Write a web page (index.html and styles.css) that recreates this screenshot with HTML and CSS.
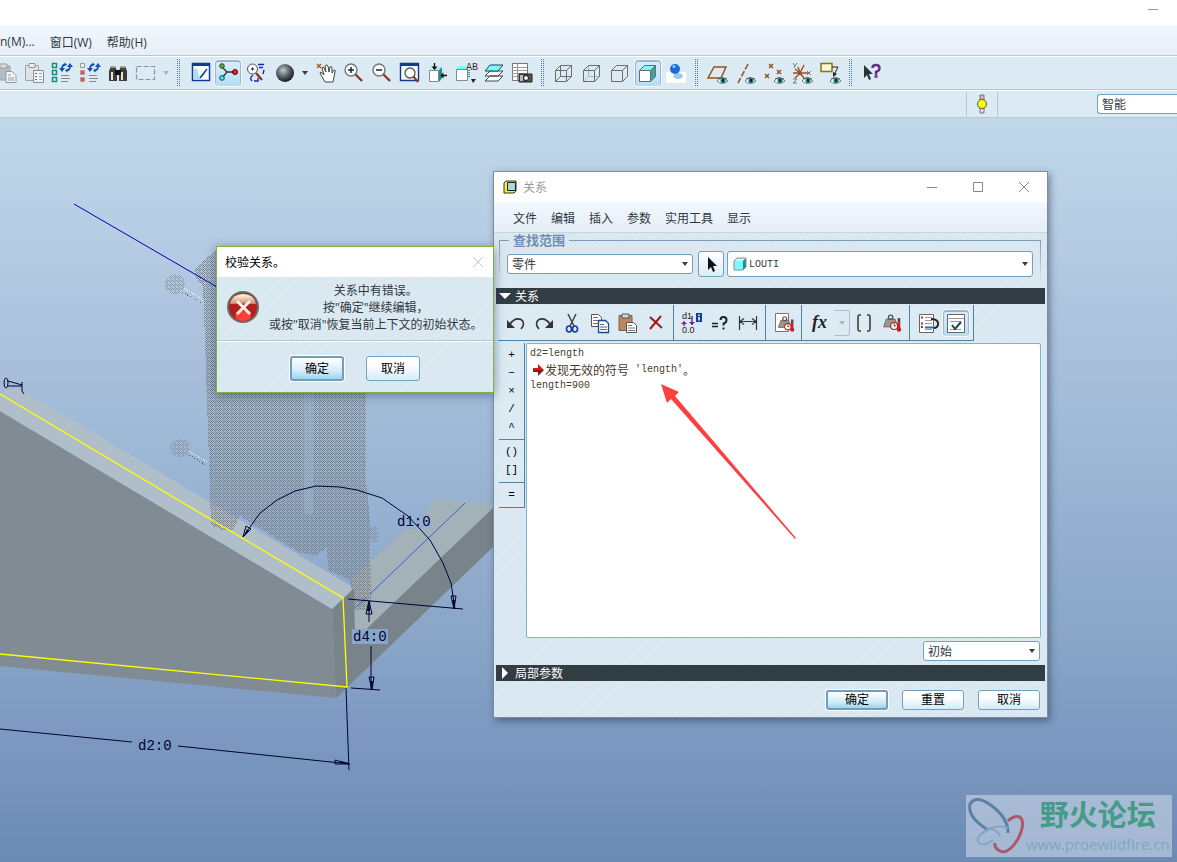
FILE: index.html
```
<!DOCTYPE html>
<html lang="zh-CN">

<head>
    <meta charset="utf-8">
    <title>关系</title>
    <meta name="viewport" content="width=device-width, initial-scale=1">
    <link rel="stylesheet" href="styles.css">
</head>

<body>
    <!-- shared icon parts -->
    <svg class="defs" width="0" height="0" aria-hidden="true">
        <symbol id="eye" viewBox="0 0 11 7">
            <path d="M0 4Q5-2 11 4Q5 9 0 4Z" fill="#fff" stroke="#777" stroke-width="1"/>
            <path d="M1 2Q5-1 10 2" fill="none" stroke="#555"/>
            <circle cx="6" cy="3.5" r="2.6" fill="#108888"/><rect x="5" y="2" width="2" height="3" fill="#123"/>
        </symbol>
        <symbol id="lens" viewBox="0 0 24 24">
            <path d="M13 13L20 20" stroke="#8b3a20" stroke-width="2.4"/>
            <circle cx="9" cy="9" r="6" fill="#f6fbff" stroke="#777" stroke-width="1.4"/>
        </symbol>
        <symbol id="cube" viewBox="0 0 24 24">
            <path d="M3.500 9.500h11v11h-11ZM3.500 9.500L8.500 4.500h11L14.500 9.500M19.500 4.500v11l-5 5" fill="none" stroke="#6b6b6b"/>
        </symbol>
        <symbol id="swap" viewBox="0 0 24 24">
            <path d="M12 8Q12 4 15 3.500M20 5Q20 9 17 9.500" fill="none" stroke="#1450b8" stroke-width="1.800"/>
            <path d="M9 7h6l-3 4ZM17 6h6l-3-4ZM14.500 1.500v4l2.500-2ZM17.500 7.500v4l-2.500-2Z" fill="#1450b8"/>
            <path d="M11 14.500h8M11 17.500h9M11 20.500h7" stroke="#888"/>
        </symbol>
        <symbol id="weight" viewBox="0 0 24 24">
            <path d="M3 17L6 8h10l3 9Z" fill="#999790" stroke="#666"/><circle cx="11" cy="6" r="2.500" fill="none" stroke="#555" stroke-width="1.500"/>
            <circle cx="15" cy="16" r="4" fill="#fff" stroke="#a22" stroke-width="1.300"/><path d="M15 13v3h2" fill="none" stroke="#222"/>
            <path d="M20.500 7v12" stroke="#444" stroke-width="3"/><path d="M20.500 10v10" stroke="#e02020" stroke-width="2"/><circle cx="20.500" cy="20" r="2.500" fill="#d01818"/>
        </symbol>
    </svg>

    <header class="titlebar"><button class="min" aria-label="最小化"></button></header>

    <nav class="menubar">
        <a href="#app">n(M)...</a>
        <a href="#window">窗口(W)</a>
        <a href="#help">帮助(H)</a>
    </nav>

    <div class="toolbar">
        <button class="tool" aria-label="粘贴"><svg viewBox="0 0 24 24"><path d="M3 5h13v14H3Z" fill="#b5bcc1" stroke="#969da2"/><path d="M6 3h7v4H6Z" fill="#ddd" stroke="#999"/><path d="M12 10.500h6l4 4v7H12Z" fill="#f1f4f6" stroke="#999"/><path d="M14 14h3M14 17h6M14 19h6" stroke="#999"/></svg></button>
        <button class="tool" aria-label="选择性粘贴"><svg viewBox="0 0 24 24"><path d="M3.500 4.500h13v15h-13Z" fill="#dde2e6" stroke="#a0a5a8"/><path d="M7 2.500h6v4H7Z" fill="#eee" stroke="#999"/><path d="M11.500 9.500h10v12h-10Z" fill="#f1f4f6" stroke="#8a9096"/><path d="M13 12.500h2M13 15.500h2M13 18.500h2" stroke="#667"/><path d="M17 12.500h3M17 15.500h3M17 18.500h3" stroke="#9ab"/></svg></button>
        <button class="tool" aria-label="再生"><svg viewBox="0 0 24 24"><path d="M2.500 2.500h4v4h-4ZM2.500 9.500h4v4h-4ZM2.500 16.500h4v4h-4Z" fill="#d8f4f0" stroke="#178c80" stroke-width="1.500"/><use href="#swap"/></svg></button>
        <button class="tool" aria-label="再生管理器"><svg viewBox="0 0 24 24"><path d="M2.500 2.500h4v4h-4Z" fill="#eee" stroke="#999"/><path d="M2.500 9.500h4v4h-4ZM2.500 16.500h4v4h-4Z" fill="#e85040" stroke="#b99" stroke-width="1"/><use href="#swap"/></svg></button>
        <button class="tool" aria-label="查找"><svg viewBox="0 0 24 24"><path d="M3 20V10l2-5h4l2 5v10ZM13 20V10l2-5h4l2 5v10Z" fill="#3c3c38"/><path d="M6 11v8M16 11v8" stroke="#e8e4d0" stroke-width="2"/><path d="M9 9h6v5H9Z" fill="#111"/><path d="M5 6h4M15 6h4" stroke="#999" stroke-width="2"/></svg></button>
        <button class="tool" aria-label="选择框"><svg viewBox="0 0 24 24"><path d="M2.500 5.500h18v13h-18Z" fill="none" stroke="#8c959b" stroke-width="1.200" stroke-dasharray="5 2"/></svg></button>
        <button class="drop faded" aria-label="选择选项"></button>
        <span class="grip"></span>
        <button class="tool" aria-label="重画"><svg viewBox="0 0 24 24"><path d="M4.500 2.500h17v17h-17Z" fill="#fff" stroke="#103a94" stroke-width="1.500"/><path d="M4 2h18v3H4Z" fill="#103a94"/><path d="M6 7l12 5-7 7H6Z" fill="#a8dff4"/><path d="M9 7l9 4-7 5" fill="#e8f8ff"/><path d="M19 8l-7 9" stroke="#204080" stroke-width="1.500"/></svg></button>
        <button class="tool active" aria-label="旋转中心"><svg viewBox="0 0 24 24"><path d="M6 6l5 5h8M11 11l-5 6" fill="none" stroke="#333" stroke-width="1.300"/><circle cx="6" cy="5" r="2.300" fill="#6a3" stroke="#243"/><circle cx="6" cy="17" r="2.300" fill="#4ee" stroke="#144"/><circle cx="19" cy="11" r="2.500" fill="#e22" stroke="#500"/></svg></button>
        <button class="tool" aria-label="定向模式"><svg viewBox="0 0 24 24"><path d="M12 12l6 7" stroke="#8b3a20" stroke-width="2.500"/><circle cx="8.500" cy="8" r="5" fill="#f4faff" stroke="#555"/><path d="M7 8h3M8.500 6.500v3" stroke="#222"/><path d="M14 3.500h6M15 6.500h4M20 9l-1 4M9 14q-4 3-1 6M10 20h4v-3" fill="none" stroke="#1828a0" stroke-width="1.400"/></svg></button>
        <button class="tool" aria-label="外观库"><svg viewBox="0 0 24 24"><defs><radialGradient id="ball" cx=".4" cy=".35" r=".65"><stop offset="0" stop-color="#c4cdd2"/><stop offset=".45" stop-color="#69737a"/><stop offset="1" stop-color="#171c20"/></radialGradient></defs><circle cx="13" cy="12" r="9" fill="url(#ball)"/></svg></button>
        <button class="drop wide" aria-label="外观选项"></button>
        <button class="tool" aria-label="平移"><svg viewBox="0 0 24 24"><path d="M3 3l4 4M7 3L3 7" stroke="#b05a20" stroke-width="1.400"/><path d="M11 21l-4-7q-2-3 0-3l3 3-2-7q1-2 2 0l2 4-1-6q2-2 3 0l1 6 1-5q2-1 2 1v5l2-3q2 0 1 2l-2 10Z" fill="#fff" stroke="#444"/></svg></button>
        <button class="tool" aria-label="放大"><svg viewBox="0 0 24 24"><use href="#lens"/><path d="M6 9h6M9 6v6" stroke="#222" stroke-width="1.500"/></svg></button>
        <button class="tool" aria-label="缩小"><svg viewBox="0 0 24 24"><use href="#lens"/><path d="M6 9h6" stroke="#222" stroke-width="1.500"/></svg></button>
        <button class="tool" aria-label="重新调整"><svg viewBox="0 0 24 24"><path d="M2.500 2.500h18v17h-18Z" fill="#f4f9fc" stroke="#103a94" stroke-width="1.400"/><path d="M2 2h19v3H2Z" fill="#103a94"/><path d="M15 15l5 6" stroke="#8b3a20" stroke-width="2"/><circle cx="12" cy="12" r="5" fill="#fff" stroke="#555" stroke-width="1.300"/></svg></button>
        <button class="tool" aria-label="重定向"><svg viewBox="0 0 24 24"><path d="M3.500 9.500h9v11h-9Z" fill="#fff" stroke="#888"/><path d="M3 9l3-3h10l-3 3Z" fill="#8ff"/><path d="M13 9l3-3v11l-3 4Z" fill="#189090"/><path d="M8.500 2v6M21 14.500h-6" stroke="#111" stroke-width="1.400"/><path d="M5.500 5.500h6l-3 3.500ZM17.500 11.500v6l-3-3Z" fill="#111"/></svg></button>
        <button class="tool" aria-label="已保存视图"><svg viewBox="0 0 24 24"><path d="M2.500 8.500h11v11h-11Z" fill="#fff" stroke="#888"/><path d="M2 8l3-3h7v3Z" fill="#7ff"/><path d="M15 9v8" stroke="#289090" stroke-width="2" stroke-dasharray="1 1"/><path d="M17 18h5l-3 4Z" fill="#222"/><text x="12" y="9" class="ab">AB</text></svg></button>
        <button class="tool" aria-label="层"><svg viewBox="0 0 24 24"><path d="M3 20l5-5h13l-5 5ZM3 15l5-5h13l-5 5Z" fill="#fff" stroke="#444"/><path d="M3 10l5-6h13l-5 6Z" fill="#7ff" stroke="#245"/></svg></button>
        <button class="tool" aria-label="视图管理器"><svg viewBox="0 0 24 24"><path d="M2.500 2.500h15v17h-15Z" fill="#fff" stroke="#777"/><path d="M2 6.500h15M2 9.500h15M2 12.500h15M2 15.500h15M7.500 3v16" stroke="#999"/><path d="M9 13h13v8H9Z" fill="#55534c" stroke="#222"/><path d="M10 14h3v6h-3Z" fill="#bbb"/><circle cx="16" cy="17" r="2.500" fill="#dff" stroke="#111"/></svg></button>
        <span class="grip"></span>
        <button class="tool" aria-label="线框"><svg viewBox="0 0 24 24"><use href="#cube"/><path d="M8.500 4.500v11h11M8.500 15.500l-5 5" fill="none" stroke="#6b6b6b"/></svg></button>
        <button class="tool" aria-label="隐藏线"><svg viewBox="0 0 24 24"><path d="M8.500 4.500v11h11M8.500 15.500l-5 5" fill="none" stroke="#b5b5b0"/><use href="#cube"/></svg></button>
        <button class="tool" aria-label="消隐"><svg viewBox="0 0 24 24"><use href="#cube"/></svg></button>
        <button class="tool active" aria-label="着色"><svg viewBox="0 0 24 24"><path d="M4 9h11v11H4Z" fill="#fff"/><path d="M4 9l5-5h11l-5 5Z" fill="#7ff"/><path d="M15 9l5-5v11l-5 5Z" fill="#3aa3a3"/><use href="#cube"/></svg></button>
        <button class="tool" aria-label="增强的真实感"><svg viewBox="0 0 24 24"><path d="M2 11h20v11H2Z" fill="#fff"/><ellipse cx="14" cy="15" rx="5" ry="3" fill="#9fc8ef"/><circle cx="11" cy="8" r="5" fill="#1d6be0"/><circle cx="10" cy="5.500" r="1.500" fill="#9cf"/></svg></button>
        <span class="grip"></span>
        <button class="tool" aria-label="平面显示"><svg viewBox="0 0 24 24"><path d="M2 17l6-11h12l-5 11Z" fill="none" stroke="#97511f" stroke-width="1.500"/><use href="#eye" x="11" y="16" width="11" height="7"/></svg></button>
        <button class="tool" aria-label="轴显示"><svg viewBox="0 0 24 24"><path d="M14 3L4 22" stroke="#97511f" stroke-width="1.600" stroke-dasharray="6 2"/><use href="#eye" x="11" y="16" width="11" height="7"/></svg></button>
        <button class="tool" aria-label="点显示"><svg viewBox="0 0 24 24"><path d="M7 3l4 4M11 3l-4 4M3 13l4 4M7 13l-4 4M15 9l4 4M19 9l-4 4" stroke="#97511f" stroke-width="1.500"/><use href="#eye" x="12" y="16" width="11" height="7"/></svg></button>
        <button class="tool" aria-label="坐标系显示"><svg viewBox="0 0 24 24"><path d="M10 12h9M10 12l4-8M5 8l5 4-5 5M3 12h7l4 5M10 12l-2-6" fill="none" stroke="#97511f" stroke-width="1.400"/><path d="M3 2l2 3 2-3M5 5l-1 2M3 18h4l-4 4h4M17 10l4 4M21 10l-4 4" fill="none" stroke="#777"/><use href="#eye" x="12" y="16" width="11" height="7"/></svg></button>
        <button class="tool" aria-label="注释显示"><svg viewBox="0 0 24 24"><path d="M3 2.500h11v8H3Z" fill="#fbf5d8" stroke="#837800" stroke-width="1.500"/><path d="M14 6h6l-4 8" fill="none" stroke="#222"/><path d="M15 16v-5l4 2Z" fill="#222"/><use href="#eye" x="12" y="16" width="11" height="7"/></svg></button>
        <span class="grip"></span>
        <button class="tool" aria-label="上下文帮助"><svg viewBox="0 0 24 24"><path d="M4 4v13l3-3 2 5 2-1-2-5h4Z" fill="#27343c"/><path d="M12.500 7q0-3 3.500-3t3.500 3-3.500 4v3M14.500 15.500h3" fill="none" stroke="#6c2d86" stroke-width="2.400"/></svg></button>
    </div>

    <div class="statusbar">
        <div class="light"><svg viewBox="0 0 12 20"><path d="M4 1h4v5H4Z" fill="#e3b3a0" stroke="#777"/><path d="M4 14h4v5H4Z" fill="#dde4c8" stroke="#777"/><circle cx="6" cy="10" r="4.500" fill="#ff0" stroke="#554"/></svg></div>
        <select class="filter" aria-label="选择过滤器"><option>智能</option></select>
    </div>

    <main class="viewport">
        <svg class="model" viewBox="0 118 1177 744" preserveAspectRatio="xMinYMin slice">
            <defs>
                <pattern id="dither" width="4" height="4" patternUnits="userSpaceOnUse">
                    <path d="M0 0h1v1h-1ZM2 0h1v1h-1ZM1 1h1v1h-1ZM3 1h1v1h-1ZM0 2h1v1h-1ZM2 2h1v1h-1ZM3 3h1v1h-1Z" fill="#74797c" fill-opacity=".85"/>
                </pattern>
                <pattern id="dots" width="4" height="4" patternUnits="userSpaceOnUse">
                    <path d="M0 0h1v1h-1ZM2 0h1v1h-1ZM1 1h1v1h-1ZM3 1h1v1h-1ZM2 2h1v1h-1ZM3 3h1v1h-1Z" fill="#808588" fill-opacity=".7"/>
                </pattern>
            </defs>
            <polygon points="351,580 438,499 493,504 493,508 367,629 355,640 354,588" fill="#a3b1b9"/>
            <polygon points="493,508 493,547 336,698 332,609 354,588 355,640" fill="#78838a"/>
            <polygon points="0,411 332,609 336,698 0,666" fill="#808b93"/>
            <polygon points="0,393 12,389 22,390 354,588 332,609 0,411" fill="#b0bec9"/>
            <g shape-rendering="crispEdges">
                <path d="M195 268L216 250L366 260L366 480L370 520L371 610L355 610L350 580L328 570L327 548L316 555L300 553L240 516L233 530H222L211 525L207 400L203 285L196 280Z" fill="url(#dither)"/>
                <path d="M304 394h9v120h-9Z" fill="#9fb8d5" fill-opacity=".4"/>
                <ellipse cx="175" cy="284" rx="10" ry="10" fill="url(#dots)"/>
                <ellipse cx="180" cy="448" rx="10" ry="9" fill="url(#dots)"/>
                <ellipse cx="374" cy="534" rx="5" ry="8" fill="url(#dots)"/>
                <path d="M184 288l18 11M189 451l19 11" stroke="#e8f0f8" stroke-dasharray="1 1"/>
                <path d="M182 292l20 11M189 455l17 10" stroke="#546678" stroke-dasharray="1 2"/>
            </g>
            <path d="M74 204L217 287" stroke="#0000b8"/>
            <path d="M355 608L366 598M370 594L465 503" stroke="#2a68cc"/>
            <path d="M0 394L343 598L347 687L0 654" fill="none" stroke="#ff0" stroke-width="1.300"/>
            <rect x="352" y="629" width="36" height="15" fill="#89a5c8"/>
            <path d="M397 513h28l6 8v8h-34Z" fill="#95afd0"/>
            <g fill="none" stroke="#000038">
                <path d="M243 537L260 513L277 500L295 491L316 486L340 487L357 490L382 498L408 516L430 540L443 563L451 583L455 609"/>
                <path d="M243 537l3-11 5 3ZM454 609l-3-13h5ZM369 601l-3 13h6ZM372 690l-3-13h5ZM349 764l-14-4v4Z"/>
                <path d="M348 599L463 609M369 602v20M371 646v44M351 688L380 690M0 729L132 742M178 746L350 764M346 688L349 770M8 381l14 4M8 386h14M22 382v9l2 3"/>
                <ellipse cx="6" cy="383" rx="2" ry="5"/>
            </g>
            <path d="M244 536l3-7 2 2ZM454 608l-2-8h3ZM369 603l-2 8h3ZM372 689l-2-8h3ZM349 763l-9-2v2Z" fill="#000038"/>
            <g class="dims">
                <text x="397" y="526">d1:0</text>
                <text x="353" y="641">d4:0</text>
                <text x="138" y="750">d2:0</text>
            </g>
        </svg>

        <section class="window relations">
            <header class="win-title">
                <svg class="app-icon" viewBox="0 0 14 14"><path d="M1 3l2-2h10v10l-2 2H1Z" fill="#f7ef35" stroke="#333"/><path d="M4.500 2.500h8v8h-8Z" fill="#a0dce8" stroke="#222"/></svg>
                <span>关系</span>
                <div class="win-buttons">
                    <button aria-label="最小化"><svg viewBox="0 0 12 12"><path d="M1 6.500h10"/></svg></button>
                    <button aria-label="最大化"><svg viewBox="0 0 12 12"><path d="M1.500 1.500h9v9h-9Z"/></svg></button>
                    <button aria-label="关闭"><svg viewBox="0 0 12 12"><path d="M1 1l10 10M11 1L1 11"/></svg></button>
                </div>
            </header>
            <nav class="win-menu">
                <a href="#file">文件</a>
                <a href="#edit">编辑</a>
                <a href="#insert">插入</a>
                <a href="#params">参数</a>
                <a href="#tools">实用工具</a>
                <a href="#show">显示</a>
            </nav>

            <fieldset class="scope">
                <legend>查找范围</legend>
                <div class="scope-row">
                    <div class="combo type"><select aria-label="对象类型"><option>零件</option></select></div>
                    <button class="pick" aria-label="选择"><svg viewBox="0 0 24 24"><path d="M9 5v13l3-3 2 5 2-1-2-5h4Z" fill="#111"/></svg></button>
                    <div class="combo object">
                        <svg class="part" viewBox="0 0 14 14"><path d="M1 4h9v9H1Z" fill="#7ff"/><path d="M1 4l3-3h9l-3 3Z" fill="#bff"/><path d="M10 4l3-3v9l-3 3Z" fill="#189090"/><path d="M1 13V4l3-3h9v9l-3 3Z" fill="none" stroke="#889"/></svg>
                        <select aria-label="对象"><option>LOUTI</option></select>
                    </div>
                </div>
            </fieldset>

            <button class="section-bar"><span class="tri open"></span>关系</button>
            <div class="edit-tools">
                <div class="group">
                    <button class="tool" aria-label="撤消"><svg viewBox="0 0 24 24"><path d="M6 13Q11 6 17 8.500Q22 12 17 18" fill="none" stroke="#333" stroke-width="1.600"/><path d="M3 9v8h8Z" fill="#333"/></svg></button>
                    <button class="tool" aria-label="重做"><svg viewBox="0 0 24 24"><path d="M18 13Q13 6 7 8.500Q2 12 7 18" fill="none" stroke="#333" stroke-width="1.600"/><path d="M21 9v8h-8Z" fill="#333"/></svg></button>
                    <button class="tool" aria-label="剪切"><svg viewBox="0 0 24 24"><path d="M8 3l6 12M16 3l-6 12" stroke="#444" stroke-width="1.500"/><ellipse cx="9" cy="18" rx="2.500" ry="3" fill="none" stroke="#1038a0" stroke-width="1.600"/><ellipse cx="15" cy="18" rx="2.500" ry="3" fill="none" stroke="#1038a0" stroke-width="1.600"/></svg></button>
                    <button class="tool" aria-label="复制"><svg viewBox="0 0 24 24"><path d="M3.500 3.500h7l3 3v9h-10Z" fill="#fff" stroke="#555"/><path d="M5 6.500h5M5 9.500h6M5 12.500h5" stroke="#777"/><path d="M10.500 9.500h7l3 3v9h-10Z" fill="#fff" stroke="#204890" stroke-width="1.300"/><path d="M12 13.500h4M12 16h7M12 18.500h7" stroke="#567"/></svg></button>
                    <button class="tool" aria-label="粘贴"><svg viewBox="0 0 24 24"><path d="M3 4.500h13v15H3Z" fill="#bd875c" stroke="#765"/><path d="M6 3h7v4H6Z" fill="#cdd" stroke="#555"/><path d="M10.500 11.500h7l3 3v7h-10Z" fill="#fff" stroke="#555"/><path d="M12 14.500h4M12 17h7M12 19.500h7" stroke="#777"/></svg></button>
                    <button class="tool" aria-label="删除"><svg viewBox="0 0 24 24"><path d="M6 6l12 11M17 5L6 18" stroke="#a01818" stroke-width="2"/></svg></button>
                </div>
                <div class="group">
                    <button class="tool" aria-label="切换尺寸"><svg viewBox="0 0 24 24"><text x="2" y="8" class="tiny">d1</text><text x="2" y="22" class="tiny">0.0</text><path d="M4 15v-4M12 5v9" stroke="#7a2090" stroke-width="1.400"/><path d="M1 13l3-3 3 3ZM9 11h6l-3 3Z" fill="#7a2090"/><path d="M16 2h6v9h-6Z" fill="#10409c"/><path d="M19 3.500v1.500M19 6v3.500" stroke="#fff" stroke-width="1.500"/></svg></button>
                    <button class="tool" aria-label="求值"><svg viewBox="0 0 24 24"><path d="M4 12.500h6M4 15.500h6" stroke="#222" stroke-width="1.500"/><path d="M12.500 9q0-3 3-3t3 3-3 3.500v2M14.500 17.500h2" fill="none" stroke="#222" stroke-width="2"/></svg></button>
                    <button class="tool" aria-label="显示尺寸"><svg viewBox="0 0 24 24"><path d="M3.500 5v14M20.500 5v14M4 10.500h16M8 7.500l-4 3 4 3M16 7.500l4 3-4 3" fill="none" stroke="#333" stroke-width="1.200"/></svg></button>
                </div>
                <div class="group">
                    <button class="tool" aria-label="设置单位"><svg viewBox="0 0 24 24"><path d="M3.500 2.500h13v18h-13Z" fill="#fff" stroke="#777"/><use href="#weight" x="4" y="3" width="19" height="19"/></svg></button>
                </div>
                <div class="group">
                    <button class="tool" aria-label="函数"><svg viewBox="0 0 24 24"><text x="4" y="17" class="fx">fx</text></svg></button>
                    <button class="drop boxed" aria-label="函数列表"></button>
                    <button class="tool" aria-label="括号"><svg viewBox="0 0 24 24"><path d="M9 4H7Q6 4 6 6v12q0 2 1 2h2M15 4h2q1 0 1 2v12q0 2-1 2h-2" fill="none" stroke="#443c30" stroke-width="1.600"/></svg></button>
                    <button class="tool" aria-label="质量属性"><svg viewBox="0 0 24 24"><use href="#weight" x="1" y="1" width="21" height="21"/></svg></button>
                </div>
                <div class="group">
                    <button class="tool" aria-label="排序"><svg viewBox="0 0 24 24"><path d="M3.500 3.500h14v18h-14Z" fill="#fff" stroke="#666"/><path d="M5 6.500h2M5 12.500h2M5 16h2" stroke="#c22" stroke-width="2"/><path d="M9 6.500h7M9 9.500h7M9 12.500h7M9 18.500h7" stroke="#999"/><path d="M9 16.500h8" stroke="#2070d0" stroke-width="2"/><path d="M15 8q8 0 7 6-1 3-4 3" fill="none" stroke="#222" stroke-width="2"/></svg></button>
                    <button class="tool active" aria-label="校验"><svg viewBox="0 0 24 24"><path d="M3.500 3.500h17v18h-17Z" fill="#fbfcfc" stroke="#666"/><path d="M3 7.500h17M6 10.500h11M6 18.500h11" stroke="#999"/><path d="M8 14l3 4 6-7" fill="none" stroke="#164b4b" stroke-width="2"/></svg></button>
                </div>
            </div>

            <div class="editor-row">
                <div class="operators">
                    <div class="ops">
                        <button>+</button>
                        <button>−</button>
                        <button>×</button>
                        <button>/</button>
                        <button>^</button>
                    </div>
                    <div class="ops">
                        <button>()</button>
                        <button>[]</button>
                    </div>
                    <div class="ops"><button>=</button></div>
                </div>
                <div class="editor" role="textbox" aria-multiline="true" aria-label="关系" contenteditable="true" spellcheck="false">
                    <div>d2=length</div>
                    <div class="error-line"><svg viewBox="0 0 12 12"><path d="M0 4h5V0l6 6H0Z" fill="#f01010"/><path d="M0 6h11l-6 6V8H0Z" fill="#702020"/></svg><span class="cn">发现无效的符号</span> 'length'<span class="cn">。</span></div>
                    <div>length=900</div>
                </div>
            </div>
            <div class="initial-row">
                <div class="combo initial"><select aria-label="初始"><option>初始</option></select></div>
            </div>

            <button class="section-bar"><span class="tri"></span>局部参数</button>
            <footer class="actions">
                <button class="btn primary">确定</button>
                <button class="btn">重置</button>
                <button class="btn">取消</button>
            </footer>
            <svg class="pointer" viewBox="0 0 136 156"><polygon points="0,0 18,8 14,12 135,154 134,155 10,15 6,19" fill="#fb4040"/></svg>
        </section>

        <section class="window alert">
            <header class="win-title">
                <span>校验关系。</span>
                <button class="close" aria-label="关闭"><svg viewBox="0 0 12 12"><path d="M1 1l10 10M11 1L1 11"/></svg></button>
            </header>
            <div class="message">
                <svg viewBox="0 0 32 32">
                    <defs><linearGradient id="gloss" x2="0" y2="1"><stop offset="0" stop-color="#fffdf0"/><stop offset="1" stop-color="#d08a6c"/></linearGradient></defs>
                    <circle cx="16" cy="16" r="15" fill="#b41f1c" stroke="#6b6b68" stroke-width="2"/>
                    <path d="M3 13Q5 3 16 3T29 13Q16 12 3 13Z" fill="url(#gloss)"/>
                    <ellipse cx="16" cy="25" rx="8" ry="5" fill="#ff4038"/>
                    <path d="M10 10l13 13M23 10L10 23" stroke="#f4f0ec" stroke-width="3"/>
                </svg>
                <p>关系中有错误。<br>按"确定"继续编辑，<br>或按"取消"恢复当前上下文的初始状态。</p>
            </div>
            <footer class="actions">
                <button class="btn primary">确定</button>
                <button class="btn">取消</button>
            </footer>
        </section>

        <aside class="watermark">
            <svg viewBox="0 0 60 60" fill="none">
                <path d="M22 35Q1 22 4 9Q10-1 26 11Q42 23 42 38" stroke="#5a80a4" stroke-width="3"/>
                <path d="M42 26Q48 20 54 22Q60 28 52 44Q42 60 34 56Q28 53 29 48" stroke="#a9596a" stroke-width="3"/>
                <path d="M42 33Q30 29 20 36Q8 42 13 48Q18 52 27 45M20 33Q30 33 34 41" stroke="#83a5c4" stroke-width="2"/>
            </svg>
            <div>
                <strong>野火论坛</strong>
                <a href="#forum">www.proewildfire.cn</a>
            </div>
        </aside>
    </main>
</body>

</html>
```
FILE: styles.css
```
* {
    box-sizing: border-box;
}

body {
    margin: 0;
    min-height: 100vh;
    display: flex;
    flex-direction: column;
    overflow: hidden;
    font-family: "Open Sans", "Noto Sans CJK SC", sans-serif;
    font-size: 12px;
    color: #30383f;
    background-color: #dceaf3;
}

button,
select {
    font: inherit;
    color: inherit;
    margin: 0;
    padding: 0;
    border: none;
    background: none;
}

a {
    color: inherit;
    text-decoration: none;
}

.defs {
    position: absolute;
}

/* main window */
.titlebar {
    height: 25px;
    background-color: #fff;
    display: flex;
    justify-content: flex-end;
    padding-right: 19px;
}

.min {
    width: 10px;
    height: 10px;
    border-bottom: 1px solid #999;
}

.menubar {
    height: 31px;
    display: flex;
    align-items: center;
    gap: 15px;
    padding: 3px 0 0;
    background: linear-gradient(#f1f8ff, #e6eef6);
    border-bottom: 1px solid #b6c8d6;
}

.toolbar {
    height: 34px;
    display: flex;
    align-items: center;
    margin-left: -8px;
    border-top: 1px solid #fff;
    border-bottom: 1px solid #b6c8d6;
}

.tool {
    width: 28px;
    height: 28px;
    flex: none;
    display: flex;
    align-items: center;
    justify-content: center;
    border-radius: 4px;
}

.tool svg {
    width: 24px;
    height: 24px;
    flex: none;
}

.tool.active {
    background: linear-gradient(#dceefa, #b5dcf5);
    border: 1px solid #f3f9fd;
    box-shadow: inset 0 1px 0 1px #9fb4c6;
}

.drop {
    width: 12px;
    height: 26px;
    flex: none;
    display: flex;
    align-items: center;
    justify-content: center;
}

.drop::before {
    content: "";
    border: 3px solid transparent;
    border-top: 4px solid #333d44;
    border-bottom: none;
}

.drop.wide {
    width: 14px;
}

.drop.faded::before,
.drop.boxed::before {
    border-top-color: #a9b4bb;
}

.drop.boxed {
    width: 16px;
    border: 1px solid #b3bdc5;
    border-left: none;
    border-radius: 0 3px 3px 0;
}

.grip {
    width: 14px;
    height: 28px;
    flex: none;
    background: linear-gradient(#4c7ca4 50%, transparent 50%) 5px 0 / 1px 2px repeat-y,
        linear-gradient(#4c7ca4 50%, transparent 50%) 7px 0 / 1px 2px repeat-y;
}

.ab {
    font: 10px "Liberation Mono", monospace;
    fill: #333;
}

.statusbar {
    height: 28px;
    display: flex;
    justify-content: flex-end;
    align-items: center;
    gap: 99px;
    border-top: 1px solid #fff;
    border-bottom: 1px solid #b6c8d6;
}

.light {
    width: 32px;
    height: 24px;
    display: flex;
    align-items: center;
    justify-content: center;
    border: solid #b6c6d2;
    border-width: 0 1px;
}

.light svg {
    width: 12px;
    height: 20px;
}

.filter {
    width: 80px;
    height: 20px;
    padding-left: 4px;
    appearance: none;
    background-color: #fff;
    border: 1px solid #73a2bd;
    border-right: none;
    border-radius: 3px 0 0 3px;
}

/* model view */
.viewport {
    flex: 1;
    position: relative;
    background: linear-gradient(#c0d7e9, #b5cbe3 18%, #a7bdd9 35%, #a2bdd9 38%, #97b1d2 52%, #8ba7c8 68%, #7f9bc2 80%, #6b8bb4);
}

.model {
    position: absolute;
    inset: 0;
    width: 100%;
    height: 100%;
}

.dims {
    font-family: "Liberation Mono", monospace;
    font-size: 14px;
    fill: #000038;
}

/* dialogs */
.window {
    position: absolute;
    background: repeating-linear-gradient(135deg, #d9e7f0 0 3px, #deebf3 3px 4px);
}

.win-title {
    height: 30px;
    display: flex;
    align-items: center;
    background-color: #fff;
}

.window .win-title svg {
    width: 12px;
    height: 12px;
    fill: none;
    stroke: #888;
}

.relations {
    left: 493px;
    top: 53px;
    width: 555px;
    border: 1px solid #7d8d9c;
    box-shadow: 2px 3px 7px rgba(30, 50, 80, 0.5);
}

.relations .win-title {
    padding-left: 9px;
    gap: 6px;
    color: #999;
}

.relations .win-title .app-icon {
    width: 14px;
    height: 14px;
    stroke: none;
}

.win-buttons {
    margin-left: auto;
    display: flex;
}

.win-buttons button {
    width: 46px;
    height: 28px;
}

.win-buttons svg {
    display: block;
    margin: 0 auto;
}

.win-menu {
    height: 31px;
    display: flex;
    align-items: center;
    gap: 14px;
    padding-left: 19px;
    padding-top: 2px;
    background: linear-gradient(#f1f8ff, #e6eef5);
    border-bottom: 1px solid #c6d5df;
}

.scope {
    min-width: 0;
    margin: 0 6px 5px 5px;
    padding: 4px 7px 5px;
    border: 1px solid #7f9abc;
    border-image: linear-gradient(#7f9abc, transparent) 1;
}

.scope legend {
    margin-left: 2px;
    padding: 0 4px;
    line-height: 14px;
    font-size: 13px;
    font-weight: bold;
    color: #6f8db0;
}

.scope-row {
    display: flex;
    align-items: center;
}

.combo {
    position: relative;
    height: 20px;
    display: flex;
    align-items: center;
    background-color: #fff;
    border: 1px solid #73a2bd;
    border-radius: 3px;
}

.combo::after {
    content: "";
    position: absolute;
    right: 4px;
    top: 50%;
    margin-top: -2px;
    border: 3px solid transparent;
    border-top: 4px solid #333d44;
    border-bottom: none;
    pointer-events: none;
}

.combo select {
    flex: 1;
    height: 100%;
    padding-left: 4px;
    appearance: none;
}

.type {
    width: 186px;
}

.pick {
    width: 26px;
    height: 26px;
    margin: 0 3px 0 5px;
    border: 1px solid #73a2bd;
    border-radius: 3px;
    background: linear-gradient(#fff, #dcedf8);
}

.pick svg {
    display: block;
    width: 24px;
    height: 24px;
}

.object {
    flex: 1;
    height: 26px;
    padding-left: 5px;
}

.object select {
    padding-left: 2px;
    font-family: "Liberation Mono", monospace;
    font-size: 10px;
}

.part {
    width: 14px;
    height: 14px;
}

.section-bar {
    width: calc(100% - 4px);
    height: 16px;
    margin: 0 2px;
    padding-left: 3px;
    display: flex;
    align-items: center;
    gap: 4px;
    color: #fff;
    background-color: #323c43;
}

.tri {
    width: 12px;
    height: 12px;
    background-color: #fff;
    clip-path: polygon(25% 0, 75% 50%, 25% 100%);
}

.tri.open {
    clip-path: polygon(0 25%, 100% 25%, 50% 75%);
}

.edit-tools {
    display: flex;
    margin: 1px 0 0 4px;
}

.group {
    display: flex;
    align-items: center;
    padding: 4px 3px 3px 4px;
    background-color: #dceaf3;
    border-right: 1px solid #5182a3;
    border-bottom: 1px solid #5182a3;
}

.fx {
    font: italic bold 18px "Liberation Serif", serif;
    fill: #222;
}

.tiny {
    font: 9px "Liberation Sans", sans-serif;
    fill: #222;
}

.editor-row {
    display: flex;
    gap: 1px;
    margin: 2px 6px 3px 5px;
}

.operators {
    width: 26px;
}

.ops {
    display: flex;
    flex-direction: column;
    background-color: #dceaf3;
    border-right: 1px solid #5182a3;
    border-bottom: 1px solid #5182a3;
    padding: 3px 0;
}

.ops button {
    height: 18px;
    line-height: 18px;
    font-family: "Liberation Mono", monospace;
    font-size: 11px;
    color: #000;
}

.editor {
    flex: 1;
    min-height: 295px;
    padding: 2px 3px;
    background-color: #fff;
    border: 1px solid #78b6d8;
    border-radius: 2px;
    font-family: "Liberation Mono", monospace;
    font-size: 10px;
    line-height: 16px;
    color: #4a3c28;
}

.editor > div {
    height: 16px;
}

.error-line {
    display: flex;
    align-items: center;
    white-space: pre;
    padding-left: 3px;
}

.error-line svg {
    width: 12px;
    height: 12px;
}

.cn {
    font-family: "Noto Sans CJK SC", sans-serif;
    font-size: 12px;
}

.initial-row {
    display: flex;
    justify-content: flex-end;
    margin: 0 7px 4px;
}

.initial {
    width: 117px;
}

.actions {
    display: flex;
}

.relations .actions {
    justify-content: flex-end;
    gap: 14px;
    padding: 9px 7px 7px;
}

.btn {
    width: 62px;
    height: 20px;
    line-height: 18px;
    color: #000;
    border: 1px solid #73a2bd;
    border-radius: 3px;
    background: linear-gradient(#fff 35%, #d4eaf8);
}

.btn.primary {
    border: 2px solid #6f9fba;
    line-height: 16px;
    box-shadow: 0 0 0 1px #fff;
    background: linear-gradient(#fff, #d5ecf9 60%, #9fd2f0);
}

.pointer {
    position: absolute;
    left: 167px;
    top: 212px;
    width: 136px;
    height: 156px;
    pointer-events: none;
}

.alert {
    left: 216px;
    top: 128px;
    width: 278px;
    border: 1px solid #7fb441;
    box-shadow: 0 2px 10px rgba(30, 50, 80, 0.5);
}

.alert .win-title {
    padding: 0 9px 0 8px;
    justify-content: space-between;
    color: #000;
}

.alert .win-title svg {
    display: block;
    stroke: #b5cbdc;
}

.message {
    display: flex;
    align-items: center;
    gap: 10px;
    padding: 5px 14px 7px 10px;
    border-bottom: 1px solid #b4c5d0;
}

.message svg {
    width: 32px;
    height: 32px;
    flex: none;
    margin-bottom: 1px;
}

.message p {
    flex: 1;
    margin: 0;
    line-height: 17px;
    text-align: center;
    white-space: nowrap;
}

.alert .actions {
    justify-content: center;
    gap: 22px;
    padding: 14px 0 11px;
    border-top: 1px solid #fff;
}

.alert .btn {
    width: 54px;
    height: 25px;
}

/* forum mark */
.watermark {
    position: absolute;
    right: 5px;
    bottom: 5px;
    width: 206px;
    height: 62px;
    display: flex;
    background-color: rgba(197, 209, 228, 0.65);
}

.watermark svg {
    width: 60px;
    height: 60px;
    flex: none;
}

.watermark div {
    flex: 1;
    display: flex;
    flex-direction: column;
    align-items: flex-end;
    padding-right: 5px;
}

.watermark strong {
    padding-right: 14px;
    font-size: 29px;
    line-height: 40px;
    color: #459b88;
}

.watermark a {
    font-size: 15px;
    line-height: 18px;
    color: #7da5c5;
}
```
